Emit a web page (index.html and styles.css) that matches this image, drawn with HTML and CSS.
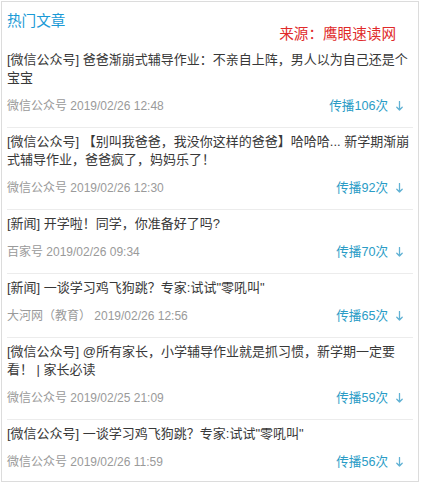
FILE: index.html
```html
<!DOCTYPE html>
<html lang="zh-CN">
<head>
<meta charset="utf-8">
<link rel="stylesheet" href="styles.css">
</head>
<body>
<div class="panel">
  <div class="header">
    <div class="title">热门文章</div>
    <div class="source">来源：鹰眼速读网</div>
  </div>
  <ul class="list">
    <li class="item">
      <div class="headline">[微信公众号] 爸爸渐崩式辅导作业：不亲自上阵，男人以为自己还是个宝宝</div>
      <div class="meta"><span class="from">微信公众号 2019/02/26 12:48</span><span class="count">传播106次<svg class="arrow" width="7" height="10" viewBox="0 0 7 10"><path d="M3.5 0.5V9M0.8 6.2L3.5 9L6.2 6.2"/></svg></span></div>
    </li>
    <li class="item">
      <div class="headline">[微信公众号] 【别叫我爸爸，我没你这样的爸爸】哈哈哈... 新学期渐崩式辅导作业，爸爸疯了，妈妈乐了！</div>
      <div class="meta"><span class="from">微信公众号 2019/02/26 12:30</span><span class="count">传播92次<svg class="arrow" width="7" height="10" viewBox="0 0 7 10"><path d="M3.5 0.5V9M0.8 6.2L3.5 9L6.2 6.2"/></svg></span></div>
    </li>
    <li class="item">
      <div class="headline">[新闻] 开学啦！同学，你准备好了吗?</div>
      <div class="meta"><span class="from">百家号 2019/02/26 09:34</span><span class="count">传播70次<svg class="arrow" width="7" height="10" viewBox="0 0 7 10"><path d="M3.5 0.5V9M0.8 6.2L3.5 9L6.2 6.2"/></svg></span></div>
    </li>
    <li class="item">
      <div class="headline">[新闻] 一谈学习鸡飞狗跳？专家:试试"零吼叫"</div>
      <div class="meta"><span class="from">大河网（教育） 2019/02/26 12:56</span><span class="count">传播65次<svg class="arrow" width="7" height="10" viewBox="0 0 7 10"><path d="M3.5 0.5V9M0.8 6.2L3.5 9L6.2 6.2"/></svg></span></div>
    </li>
    <li class="item">
      <div class="headline">[微信公众号] @所有家长，小学辅导作业就是抓习惯，新学期一定要看！ | 家长必读</div>
      <div class="meta"><span class="from">微信公众号 2019/02/25 21:09</span><span class="count">传播59次<svg class="arrow" width="7" height="10" viewBox="0 0 7 10"><path d="M3.5 0.5V9M0.8 6.2L3.5 9L6.2 6.2"/></svg></span></div>
    </li>
    <li class="item last">
      <div class="headline">[微信公众号] 一谈学习鸡飞狗跳？专家:试试"零吼叫"</div>
      <div class="meta"><span class="from">微信公众号 2019/02/26 11:59</span><span class="count">传播56次<svg class="arrow" width="7" height="10" viewBox="0 0 7 10"><path d="M3.5 0.5V9M0.8 6.2L3.5 9L6.2 6.2"/></svg></span></div>
    </li>
  </ul>
</div>
</body>
</html>
```
FILE: styles.css
```css
html, body {
  margin: 0;
  padding: 0;
  background: #ffffff;
}
body {
  font-family: "Liberation Sans", "Noto Sans CJK SC", sans-serif;
  padding: 1px;
}
.panel {
  width: 418px;
  height: 481px;
  box-sizing: border-box;
  border: 1px solid #dcdcdc;
  padding: 0 5px 0 5px;
  background: #fff;
}
.header {
  height: 44px;
}
.title {
  color: #1a9ad6;
  font-size: 14.6px;
  line-height: 18px;
  padding-top: 10px;
}
.source {
  color: #e02a2a;
  font-size: 14.6px;
  line-height: 18px;
  text-align: right;
  padding-right: 17px;
  margin-top: -5px;
}
.list {
  list-style: none;
  margin: 0;
  padding: 0;
}
.item {
  padding: 5px 0 12px 0;
  border-bottom: 1px solid #ececec;
}
.item.last {
  border-bottom: none;
}
.headline {
  color: #383838;
  font-size: 13px;
  line-height: 18px;
  padding-right: 2px;
}
.meta {
  margin-top: 10px;
  display: flex;
  justify-content: space-between;
  align-items: center;
  font-size: 12px;
  line-height: 18px;
}
.from {
  color: #9a9a9a;
}
.count {
  color: #2a9cc6;
  font-size: 12.6px;
  padding-right: 10px;
  display: flex;
  align-items: center;
}
.arrow {
  margin-left: 8px;
  fill: none;
  stroke: #62b2d4;
  stroke-width: 1.3;
  stroke-linecap: round;
  stroke-linejoin: round;
}
```
